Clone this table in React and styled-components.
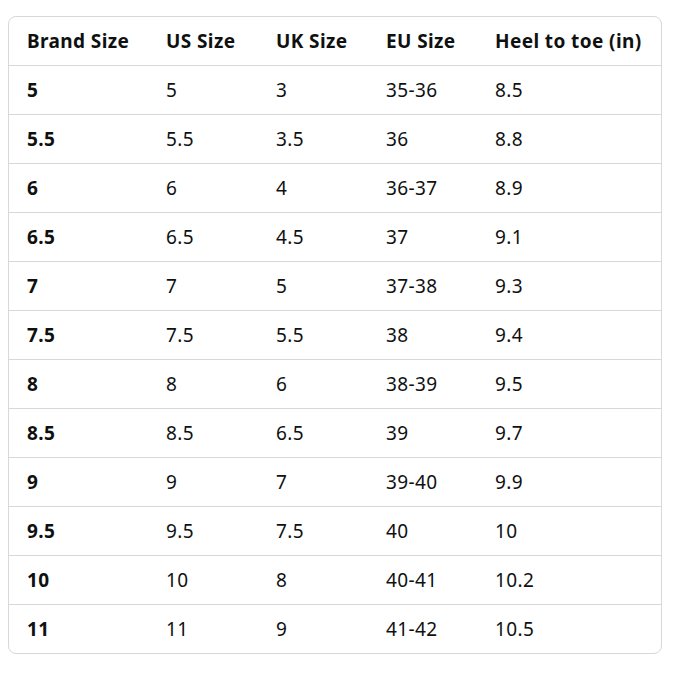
import React from 'react';
import styled, { createGlobalStyle } from 'styled-components';

const GlobalStyle = createGlobalStyle`
  body {
    margin: 0;
    background: #ffffff;
    font-family: "Noto Sans", "Open Sans", Arial, sans-serif;
    color: #0f1111;
  }
`;

const Page = styled.div`
  padding: 16px 8px;
`;

const TableBox = styled.div`
  width: 654px;
  box-sizing: border-box;
  border: 1px solid #d5d9d9;
  border-radius: 8px;
  overflow: hidden;
`;

const Row = styled.div`
  display: grid;
  grid-template-columns: 139px 110px 110px 109px 1fr;
  height: 48px;
  align-items: center;
  border-top: ${(props) => (props.first ? 'none' : '1px solid #d5d9d9')};
`;

const Cell = styled.div`
  padding-left: 18px;
  font-size: 19px;
  letter-spacing: 0.4px;
  font-weight: ${(props) => (props.bold ? 700 : 400)};
  white-space: nowrap;
`;

const headers = ['Brand Size', 'US Size', 'UK Size', 'EU Size', 'Heel to toe (in)'];

const rows = [
  ['5', '5', '3', '35-36', '8.5'],
  ['5.5', '5.5', '3.5', '36', '8.8'],
  ['6', '6', '4', '36-37', '8.9'],
  ['6.5', '6.5', '4.5', '37', '9.1'],
  ['7', '7', '5', '37-38', '9.3'],
  ['7.5', '7.5', '5.5', '38', '9.4'],
  ['8', '8', '6', '38-39', '9.5'],
  ['8.5', '8.5', '6.5', '39', '9.7'],
  ['9', '9', '7', '39-40', '9.9'],
  ['9.5', '9.5', '7.5', '40', '10'],
  ['10', '10', '8', '40-41', '10.2'],
  ['11', '11', '9', '41-42', '10.5'],
];

const App = () => (
  <Page>
    <GlobalStyle />
    <TableBox>
      <Row first>
        {headers.map((h) => (
          <Cell key={h} bold>
            {h}
          </Cell>
        ))}
      </Row>
      {rows.map((r) => (
        <Row key={r[0]}>
          {r.map((v, i) => (
            <Cell key={i} bold={i === 0}>
              {v}
            </Cell>
          ))}
        </Row>
      ))}
    </TableBox>
  </Page>
);

export default App;
